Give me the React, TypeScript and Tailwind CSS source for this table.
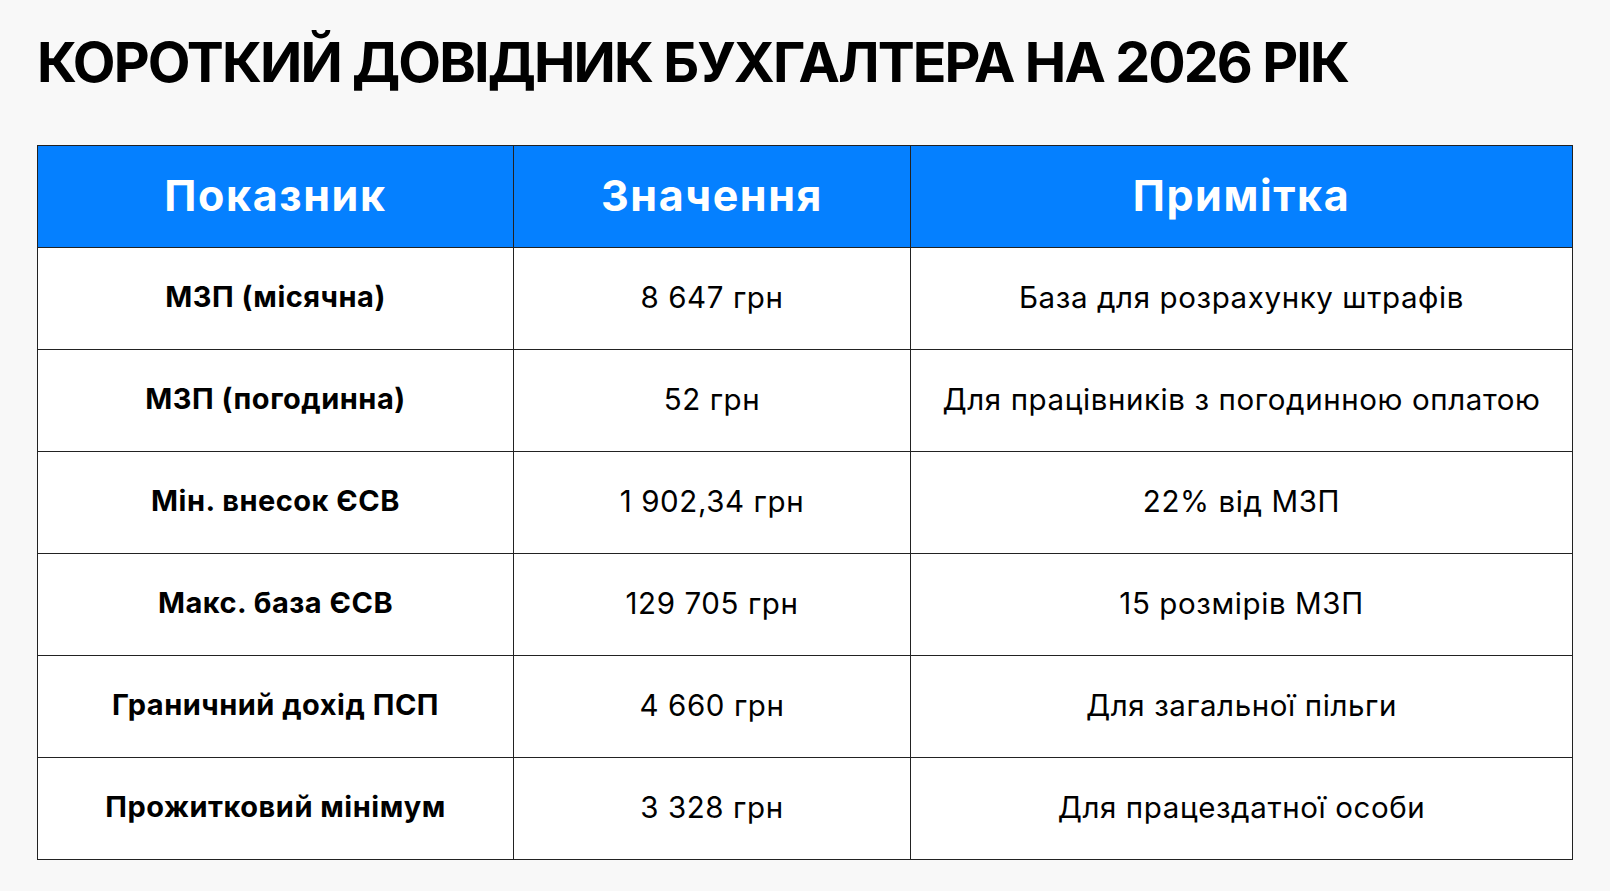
import React from "react";

const rows: [string, string, string][] = [
  ["МЗП (місячна)", "8 647 грн", "База для розрахунку штрафів"],
  ["МЗП (погодинна)", "52 грн", "Для працівників з погодинною оплатою"],
  ["Мін. внесок ЄСВ", "1 902,34 грн", "22% від МЗП"],
  ["Макс. база ЄСВ", "129 705 грн", "15 розмірів МЗП"],
  ["Граничний дохід ПСП", "4 660 грн", "Для загальної пільги"],
  ["Прожитковий мінімум", "3 328 грн", "Для працездатної особи"],
];

export default function App() {
  return (
    <div className="min-h-screen w-full bg-[#f8f8f8] pl-[37px] pt-[28px] font-['Inter',sans-serif] text-black">
      <h1 className="text-[55.5px] font-bold leading-[68px] tracking-[-1.9px]">
        КОРОТКИЙ ДОВІДНИК БУХГАЛТЕРА НА 2026 РІК
      </h1>
      <table className="mt-[49px] w-[1535px] table-fixed border-collapse border border-[#222]">
        <colgroup>
          <col className="w-[476px]" />
          <col className="w-[397px]" />
          <col className="w-[662px]" />
        </colgroup>
        <thead>
          <tr className="h-[102px] bg-[#0580ff]">
            {["Показник", "Значення", "Примітка"].map((h) => (
              <th key={h} className="border border-[#222] pb-[2px] text-center text-[43px] font-bold tracking-[1.6px] text-white">
                {h}
              </th>
            ))}
          </tr>
        </thead>
        <tbody>
          {rows.map((r) => (
            <tr key={r[0]} className="h-[102px] bg-white">
              <td className="border border-[#222] pb-[3px] text-center text-[29px] font-bold tracking-[0.5px]">{r[0]}</td>
              <td className="border border-[#222] pb-[3px] text-center text-[29.5px] font-normal tracking-[0.6px]">{r[1]}</td>
              <td className="border border-[#222] pb-[3px] text-center text-[29.5px] font-normal tracking-[0.6px]">{r[2]}</td>
            </tr>
          ))}
        </tbody>
      </table>
    </div>
  );
}
